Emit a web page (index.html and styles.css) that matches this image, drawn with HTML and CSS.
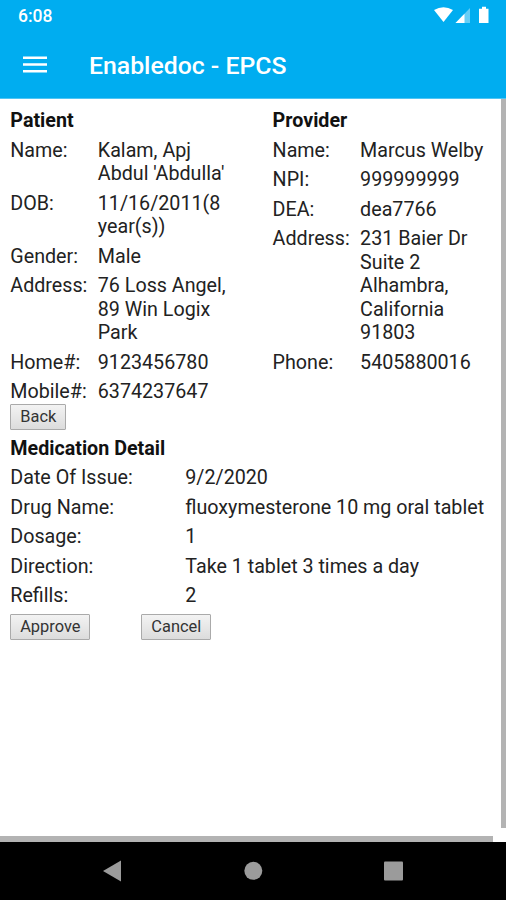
FILE: index.html
```html
<!DOCTYPE html>
<html lang="en">
<head>
    <meta charset="UTF-8">
    <meta name="viewport" content="width=device-width, initial-scale=1.0">
    <title>Enabledoc - EPCS</title>
    <link rel="stylesheet" href="styles.css">
</head>
<body>
    <header>
        <div class="status-bar">
            <span>6:08</span>
            <svg class="status-icons" width="56" height="18" viewBox="0 0 56 18" fill="#fff">
                <path d="M0 4Q9.500 -1.500 19 4L9.500 16Z"/>
                <path d="M36 2V17H21.500Z" opacity="0.4"/>
                <path d="M30.500 7.700V17H21.500Z"/>
                <path d="M48 0.800h4v2h2.500v14.200h-9.500v-14.200h3z"/>
            </svg>
        </div>
        <nav>
            <svg class="menu" width="24" height="18" viewBox="0 0 24 18" fill="#fff">
                <path d="M0 0.500h24v2.600h-24zM0 7.200h24v2.600h-24zM0 14h24v2.600h-24z"/>
            </svg>
            <h1>Enabledoc - EPCS</h1>
        </nav>
    </header>

    <main>
        <div class="content">
            <div class="people">
                <div class="person">
                    <h2>Patient</h2>
                    <div class="row"><span>Name:</span><span>Kalam, Apj Abdul 'Abdulla'</span></div>
                    <div class="row"><span>DOB:</span><span>11/16/2011(8 year(s))</span></div>
                    <div class="row"><span>Gender:</span><span>Male</span></div>
                    <div class="row"><span>Address:</span><span>76 Loss Angel, 89 Win Logix Park</span></div>
                    <div class="row"><span>Home#:</span><span>9123456780</span></div>
                    <div class="row"><span>Mobile#:</span><span>6374237647</span></div>
                </div>
                <div class="person">
                    <h2>Provider</h2>
                    <div class="row"><span>Name:</span><span>Marcus Welby</span></div>
                    <div class="row"><span>NPI:</span><span>999999999</span></div>
                    <div class="row"><span>DEA:</span><span>dea7766</span></div>
                    <div class="row"><span>Address:</span><span>231 Baier Dr Suite 2 Alhambra, California 91803</span></div>
                    <div class="row"><span>Phone:</span><span>5405880016</span></div>
                </div>
            </div>
            <button class="btn back">Back</button>

            <div class="medication">
                <h2>Medication Detail</h2>
                <div class="row"><span>Date Of Issue:</span><span>9/2/2020</span></div>
                <div class="row"><span>Drug Name:</span><span>fluoxymesterone 10 mg oral tablet</span></div>
                <div class="row"><span>Dosage:</span><span>1</span></div>
                <div class="row"><span>Direction:</span><span>Take 1 tablet 3 times a day</span></div>
                <div class="row"><span>Refills:</span><span>2</span></div>
            </div>
            <div class="actions">
                <button class="btn approve">Approve</button>
                <button class="btn cancel">Cancel</button>
            </div>
        </div>
        <!-- scroll indicators -->
        <div class="scroll-y"></div>
        <div class="scroll-x"></div>
    </main>

    <footer>
        <svg width="506" height="58" viewBox="0 0 506 58" fill="#9b9b9b">
            <path d="M103 29L121 18.500V39.500Z"/>
            <circle cx="253.300" cy="28.800" r="9"/>
            <rect x="384" y="19.500" width="19" height="19" rx="1"/>
        </svg>
    </footer>
</body>
</html>
```
FILE: styles.css
```css
* {
    box-sizing: border-box;
}

body {
    font-family: Roboto, sans-serif;
    margin: 0;
    height: 900px;
    display: flex;
    flex-direction: column;
    overflow: hidden;
    background-color: #fff;
    color: #222;
}

header {
    height: 99px;
    background: #00adf0;
    border-bottom: 1px solid #4fc5f4;
    color: #fff;
}

.status-bar {
    display: flex;
    justify-content: space-between;
    height: 32px;
    padding: 6px 16px 0 18px;
    font-size: 17.500px;
    font-weight: 500;
    line-height: 20px;
}

nav {
    display: flex;
    align-items: center;
    gap: 42px;
    height: 67px;
    padding: 0 0 1px 23px;
}

nav h1 {
    margin: 0;
    font-size: 24.800px;
    font-weight: 500;
}

main {
    position: relative;
    flex: 1;
}

.content {
    padding: 10px 0 0 10.300px;
    font-size: 19.700px;
    line-height: 23.500px;
}

.people {
    display: grid;
    grid-template-columns: 262.300px 219px;
    height: 295px;
}

.person,
.medication {
    display: flex;
    flex-direction: column;
    gap: 6px;
}

h2 {
    margin: 0;
    font-size: 19.700px;
    font-weight: 700;
    color: #111;
}

.row {
    display: grid;
    grid-template-columns: 87.500px 131px;
}

.medication .row {
    grid-template-columns: 175px 306px;
}

.btn {
    display: block;
    height: 26px;
    padding: 0;
    font-family: Roboto, sans-serif;
    font-size: 16.400px;
    line-height: 22px;
    color: #333;
    background: linear-gradient(#f3f3f3, #dcdcdc);
    border: 1px solid #aaa;
    border-radius: 1px;
}

.back {
    width: 56px;
    margin-bottom: 6.500px;
}

.actions {
    display: flex;
    gap: 51px;
    margin-top: 6px;
}

.approve {
    width: 80px;
}

.cancel {
    width: 70px;
}

.scroll-y {
    position: absolute;
    top: 0;
    right: 0;
    width: 5px;
    height: 729px;
    background: #b3b3b3;
}

.scroll-x {
    position: absolute;
    left: 0;
    bottom: 0;
    width: 493px;
    height: 6px;
    background: #b3b3b3;
}

footer {
    height: 58px;
    background: #000;
}
```
